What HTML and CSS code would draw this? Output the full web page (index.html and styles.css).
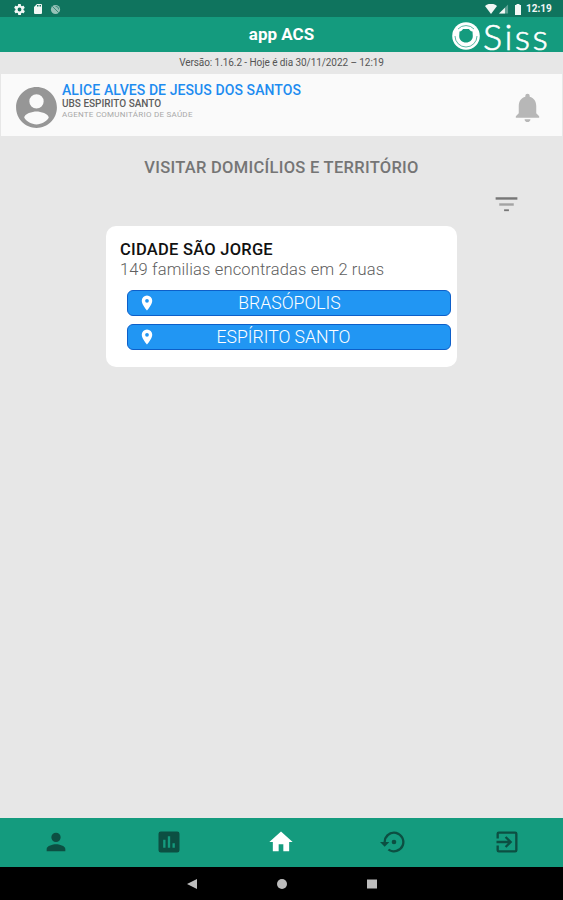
FILE: index.html
```html
<!DOCTYPE html>
<html lang="pt-BR">
<head>
    <meta charset="UTF-8">
    <meta name="viewport" content="width=device-width, initial-scale=1.0">
    <title>app ACS</title>
    <link rel="stylesheet" href="styles.css">
</head>
<body>
    <div class="status-bar">
        <div class="status-left">
            <svg width="13" height="13" viewBox="0 0 24 24"><path d="M19.4 13a7.500 7.500 0 0 0 0-2l2.100-1.600a.5.5 0 0 0 .1-.6l-2-3.500a.5.5 0 0 0-.6-.2l-2.500 1a7 7 0 0 0-1.700-1l-.4-2.600a.5.5 0 0 0-.5-.5h-4a.5.5 0 0 0-.5.4l-.4 2.700a7 7 0 0 0-1.700 1l-2.500-1a.5.5 0 0 0-.6.200l-2 3.500a.5.5 0 0 0 .1.600L4.600 11a8 8 0 0 0 0 2l-2.100 1.600a.5.5 0 0 0-.1.600l2 3.500c.1.200.4.300.6.200l2.500-1a7 7 0 0 0 1.700 1l.4 2.600c0 .3.200.5.5.5h4c.3 0 .5-.2.5-.5l.4-2.600a7 7 0 0 0 1.700-1l2.500 1c.2.100.5 0 .6-.2l2-3.500a.5.500 0 0 0-.1-.6zM12 15.500a3.500 3.500 0 1 1 0-7 3.500 3.500 0 0 1 0 7z"/></svg>
            <svg width="12" height="12" viewBox="0 0 24 24"><path d="M18 2h-8L4 8v12a2 2 0 0 0 2 2h12a2 2 0 0 0 2-2V4a2 2 0 0 0-2-2zm-6 5h-2V4h2zm3 0h-2V4h2zm3 0h-2V4h2z"/></svg>
            <svg class="dim" width="11" height="11" viewBox="0 0 24 24"><circle cx="12" cy="12" r="10"/><path class="ring" d="M5 5l14 14M12 5a7 7 0 0 1 7 7"/></svg>
        </div>
        <div class="status-right">
            <svg width="12" height="10" viewBox="0 0 24 20"><path d="M0 4a18 18 0 0 1 24 0L12 20z"/></svg>
            <svg width="10" height="10" viewBox="0 0 22 20"><path class="weak" d="M20 0v20H0z"/><path d="M13 7v13H0z"/></svg>
            <svg class="battery" width="6" height="11" viewBox="0 0 12 22"><path d="M3 0h6v2h3v20H0V2h3z"/></svg>
            <span class="clock">12:19</span>
        </div>
    </div>

    <header class="header">
        <h1>app ACS</h1>
        <div class="logo">
            <svg width="28" height="28" viewBox="0 0 28 28">
                <circle cx="14" cy="14" r="13.800"/>
                <path class="line" d="M3 14a11 11 0 0 0 22 0M6 7a11 11 0 0 1 16 0"/>
                <path class="hole" d="M7.500 9.500c2-.2 3-1.500 3.500-2.500h6c.5 1 1.500 2.300 3.500 2.500l.3 4.500c0 4-3 6.500-6.800 6.500S7.200 18 7.200 14z"/>
            </svg>
            <span>Siss</span>
        </div>
    </header>

    <div class="version">Versão: 1.16.2 - Hoje é dia 30/11/2022 – 12:19</div>

    <section class="user">
        <svg class="avatar" width="49" height="49" viewBox="0 0 24 24"><path d="M12 2C6.480 2 2 6.480 2 12s4.480 10 10 10 10-4.480 10-10S17.520 2 12 2zm0 3.500a3.500 3.500 0 1 1 0 7 3.500 3.500 0 0 1 0-7zm0 14.800c-2.500 0-4.710-1.280-6-3.220.03-1.990 4-3.080 6-3.080 1.990 0 5.970 1.090 6 3.080-1.290 1.940-3.500 3.220-6 3.220z"/></svg>
        <div class="user-data">
            <div class="user-name">ALICE ALVES DE JESUS DOS SANTOS</div>
            <div class="user-unit">UBS ESPIRITO SANTO</div>
            <div class="user-role">AGENTE COMUNITÁRIO DE SAÚDE</div>
        </div>
        <svg class="bell" width="35" height="35" viewBox="0 0 24 24"><path d="M12 22c1.100 0 2-.9 2-2h-4c0 1.100.9 2 2 2zm6-6v-5c0-3.070-1.630-5.640-4.500-6.320V4a1.500 1.500 0 0 0-3 0v.68C7.640 5.360 6 7.920 6 11v5l-2 2v1h16v-1z"/></svg>
    </section>

    <main>
        <h2>VISITAR DOMICÍLIOS E TERRITÓRIO</h2>
        <div class="filter">
            <svg width="29" height="29" viewBox="0 0 24 24"><path d="M3 6h18v2H3z"/><path class="mid" d="M6 11h12v2H6z"/><path d="M10 16h4v1.500h-4z"/></svg>
        </div>

        <div class="card">
            <h3>CIDADE SÃO JORGE</h3>
            <p>149 familias encontradas em 2 ruas</p>
            <button class="street">
                <svg width="18" height="18" viewBox="0 0 24 24"><path d="M12 2a7 7 0 0 0-7 7c0 5.250 7 13 7 13s7-7.750 7-13a7 7 0 0 0-7-7zm0 9.500a2.500 2.500 0 1 1 0-5 2.500 2.500 0 0 1 0 5z"/></svg>
                <span class="brasopolis">BRASÓPOLIS</span>
            </button>
            <button class="street">
                <svg width="18" height="18" viewBox="0 0 24 24"><path d="M12 2a7 7 0 0 0-7 7c0 5.250 7 13 7 13s7-7.750 7-13a7 7 0 0 0-7-7zm0 9.500a2.500 2.500 0 1 1 0-5 2.500 2.500 0 0 1 0 5z"/></svg>
                <span>ESPÍRITO SANTO</span>
            </button>
        </div>
    </main>

    <nav class="tabs">
        <a><svg viewBox="0 0 24 24"><path d="M12 12a4 4 0 1 0 0-8 4 4 0 0 0 0 8zm0 2c-2.670 0-8 1.340-8 4v2h16v-2c0-2.660-5.330-4-8-4z"/></svg></a>
        <a><svg viewBox="0 0 24 24"><path d="M19 3H5a2 2 0 0 0-2 2v14a2 2 0 0 0 2 2h14a2 2 0 0 0 2-2V5a2 2 0 0 0-2-2zM9 17H7v-7h2zm4 0h-2V7h2zm4 0h-2v-4h2z"/></svg></a>
        <a class="active"><svg viewBox="0 0 24 24"><path d="M10 20v-6h4v6h5v-8h3L12 3 2 12h3v8z"/></svg></a>
        <a><svg viewBox="0 0 24 24"><path d="M14 12a2 2 0 1 0-4 0 2 2 0 0 0 4 0zM12 3a9 9 0 0 0-9 9H0l4 4 4-4H5a7 7 0 1 1 2.940 5.700l-1.420 1.440A9 9 0 1 0 12 3z"/></svg></a>
        <a><svg viewBox="0 0 24 24"><path d="M10.090 15.590L11.500 17l5-5-5-5-1.410 1.410L12.670 11H3v2h9.670zM19 3H5a2 2 0 0 0-2 2v4h2V5h14v14H5v-4H3v4a2 2 0 0 0 2 2h14a2 2 0 0 0 2-2V5a2 2 0 0 0-2-2z"/></svg></a>
    </nav>

    <div class="system-nav">
        <svg width="10" height="10" viewBox="0 0 10 10"><path d="M10 0v10L0 5z"/></svg>
        <svg width="10" height="10" viewBox="0 0 10 10"><circle cx="5" cy="5" r="5"/></svg>
        <svg width="10" height="10" viewBox="0 0 10 10"><path d="M0 .5h10v9H0z"/></svg>
    </div>
</body>
</html>
```
FILE: styles.css
```css
* {
    box-sizing: border-box;
}
body {
    margin: 0;
    height: 900px;
    display: flex;
    flex-direction: column;
    background-color: #e7e7e7;
    font-family: Roboto, "Liberation Sans", sans-serif;
    overflow: hidden;
}
h1, h2, h3, p {
    margin: 0;
}
svg {
    display: block;
    flex: none;
    fill: currentColor;
}
.status-bar {
    height: 17px;
    background-color: #0f745e;
    color: #f2f7f5;
    display: flex;
    justify-content: space-between;
    align-items: center;
    padding: 1px 11px 0 13px;
}
.status-left, .status-right {
    display: flex;
    align-items: center;
    gap: 6px;
}
.status-right {
    gap: 2px;
}
.dim {
    opacity: 0.6;
}
.ring {
    fill: none;
    stroke: #0f745e;
    stroke-width: 1.5;
}
.weak {
    opacity: 0.35;
}
.battery {
    margin-left: 4px;
}
.clock {
    font-size: 10px;
    font-weight: bold;
    line-height: 12px;
    margin-left: 3px;
    width: 26px;
    white-space: nowrap;
}
.header {
    height: 35px;
    background-color: #149b7e;
    color: #ffffff;
    display: grid;
    grid-template-columns: 1fr auto 1fr;
    align-items: center;
}
.header h1 {
    grid-column: 2;
    font-size: 17px;
    font-weight: bold;
    line-height: 20px;
    padding-bottom: 2px;
}
.logo {
    display: flex;
    justify-content: flex-end;
    align-items: center;
    padding: 2px 14px 0 0;
    gap: 3px;
}
.logo span {
    font-family: Lato, sans-serif;
    font-weight: 300;
    font-size: 36px;
    line-height: 26px;
    letter-spacing: 2.4px;
    width: 66px;
    -webkit-text-stroke: 0.6px #ffffff;
}
.logo .line {
    fill: none;
    stroke: #149b7e;
    stroke-width: 0.7;
}
.logo .hole {
    fill: #149b7e;
}
.version {
    height: 22px;
    padding-top: 5px;
    text-align: center;
    color: #555555;
    font-size: 10px;
    line-height: 12px;
    letter-spacing: -0.07px;
}
.user {
    height: 62px;
    margin: 0 1px;
    background-color: #fafafa;
    display: flex;
    align-items: center;
    padding: 0 17px 0 11px;
}
.avatar {
    color: #969696;
    margin-top: 5px;
}
.user-data {
    flex: 1;
    margin-top: -8px;
    padding-left: 1px;
    white-space: nowrap;
}
.user-name {
    color: #1e8cf0;
    font-size: 14px;
    font-weight: 500;
    line-height: 16px;
    letter-spacing: 0.09px;
}
.user-unit {
    color: #5d5d5d;
    font-size: 10px;
    font-weight: 500;
    line-height: 11px;
}
.user-role {
    color: #a8a8a8;
    font-size: 8px;
    line-height: 11px;
    letter-spacing: 0.26px;
}
.bell {
    color: #b7b7b7;
    margin-top: 5px;
}
main {
    flex: 1;
}
h2 {
    margin-top: 22px;
    text-align: center;
    color: #757575;
    font-size: 16.5px;
    font-weight: 500;
    line-height: 20px;
    letter-spacing: 0.29px;
}
.filter {
    display: flex;
    justify-content: flex-end;
    padding-right: 42px;
    margin-top: 12px;
    color: #777777;
}
.filter .mid {
    opacity: 0.6;
}
.card {
    width: 351px;
    height: 141px;
    margin: 7px 0 0 106px;
    background-color: #ffffff;
    border-radius: 10px;
    padding: 14px 7px 0 14px;
}
.card h3 {
    color: #111111;
    font-size: 16.5px;
    font-weight: 500;
    line-height: 20px;
    letter-spacing: 0.25px;
}
.card p {
    color: #606060;
    font-size: 16.5px;
    font-weight: 300;
    line-height: 20px;
    letter-spacing: 0.15px;
    margin-bottom: 10px;
}
.street {
    display: flex;
    align-items: center;
    width: 324px;
    height: 26px;
    margin: 0 0 8px 7px;
    padding: 0 10px;
    border: 1px solid #0d5fc9;
    border-radius: 6px;
    background-color: #2196f3;
    color: #ffffff;
    font-family: inherit;
    font-size: 17.6px;
    font-weight: 300;
    line-height: 20px;
}
.street span {
    flex: 1;
    text-align: center;
    padding-right: 29px;
}
.street .brasopolis {
    padding-right: 17px;
}
.tabs {
    height: 49px;
    background-color: #149b7e;
    color: #0c4f42;
    display: grid;
    grid-template-columns: repeat(5, 1fr);
    padding-bottom: 2px;
}
.tabs a {
    display: flex;
    justify-content: center;
    align-items: center;
}
.tabs svg {
    width: 28px;
    height: 28px;
}
.tabs .active {
    color: #ffffff;
}
.system-nav {
    height: 33px;
    background-color: #000000;
    color: #bdbdbd;
    display: flex;
    justify-content: center;
    align-items: center;
    gap: 80px;
}
```
